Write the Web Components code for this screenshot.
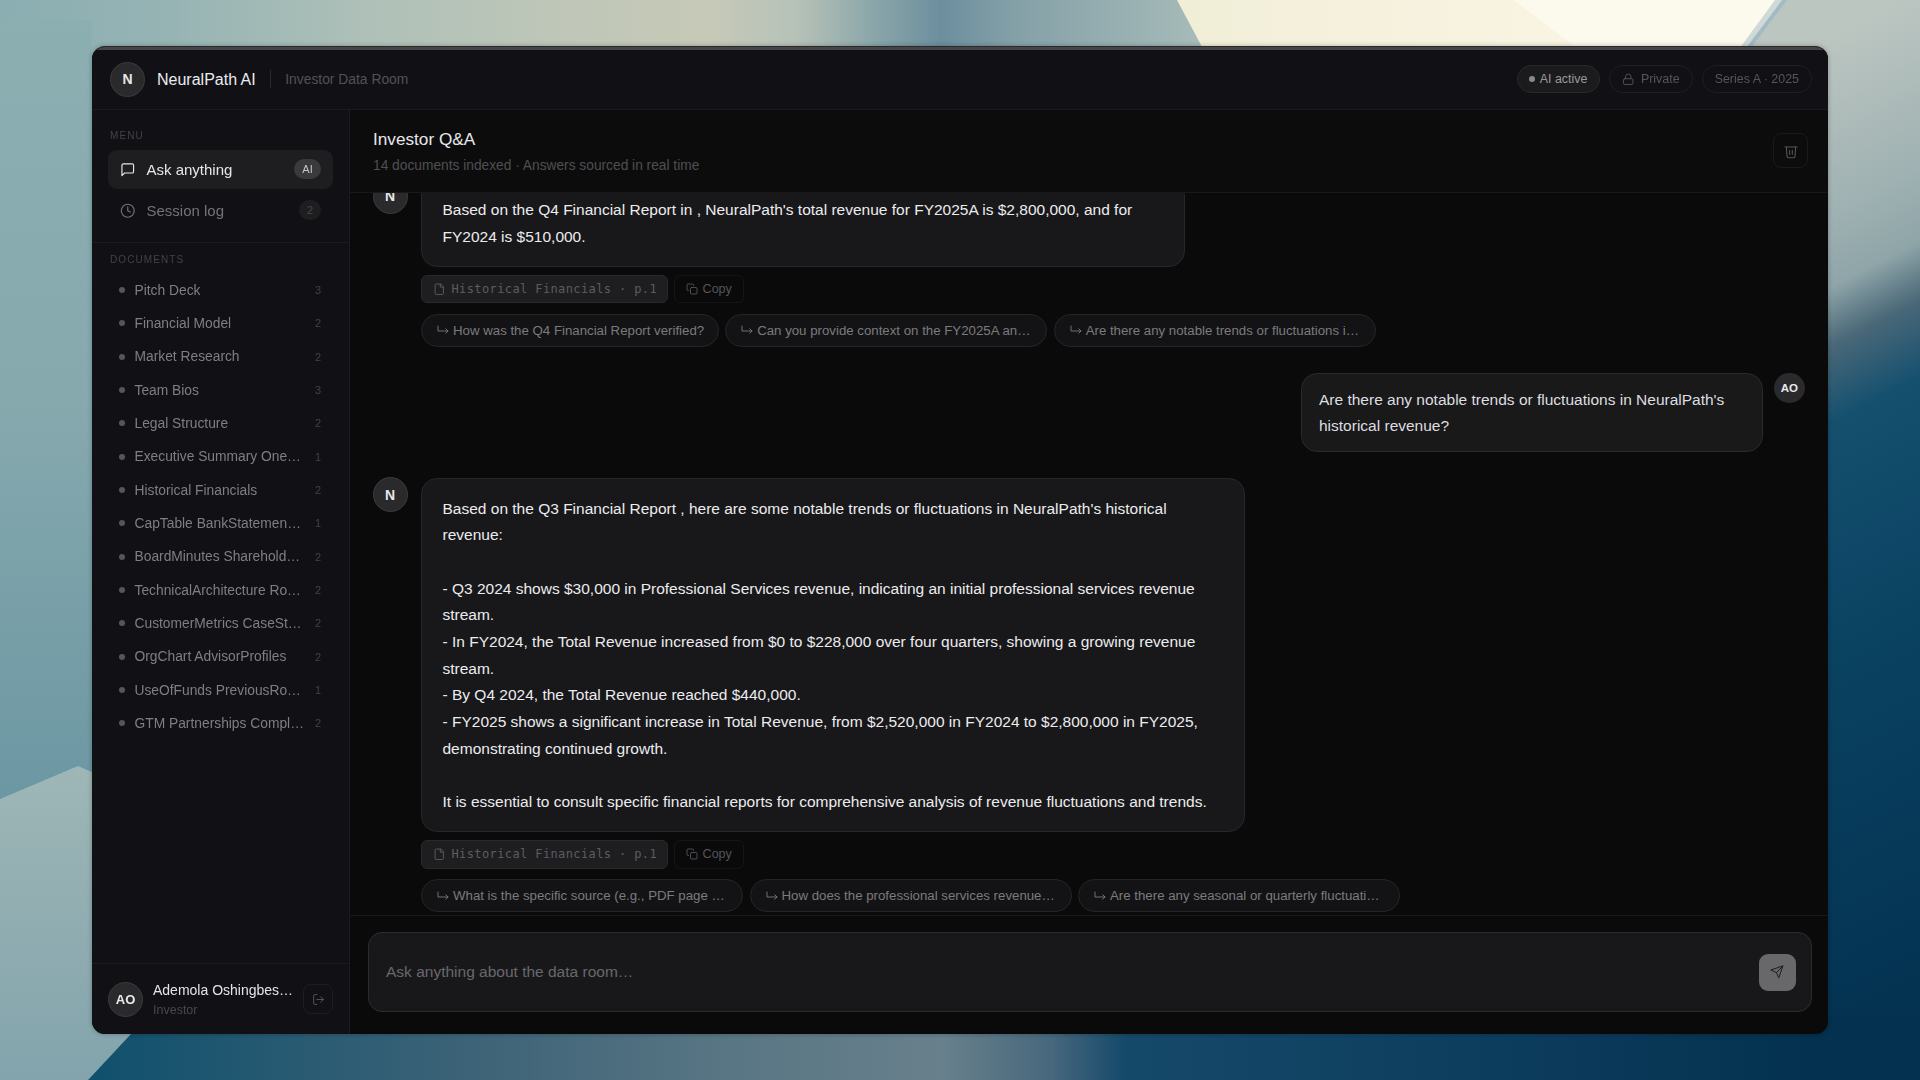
<!DOCTYPE html>
<html lang="en">
<head>
<meta charset="utf-8">
<title>NeuralPath AI</title>
<style>
  html, body { margin: 0; height: 100%; }
  body { height: 1080px; width: 1920px; box-sizing: border-box; padding: 46px 92px; overflow: hidden; background: #86a9ad;
         font-family: "Liberation Sans", Arial, sans-serif; display: flex; }
</style>
</head>
<body>
<np-wallpaper></np-wallpaper>
<np-window>
  <np-topbar slot="top"></np-topbar>
  <np-sidebar slot="side">
    <np-section-label>Menu</np-section-label>
    <np-nav icon="chat" badge="AI" active>Ask anything</np-nav>
    <np-nav icon="clock" badge="2">Session log</np-nav>
    <np-doclist slot="docs">
      <np-doc n="3">Pitch Deck</np-doc>
      <np-doc n="2">Financial Model</np-doc>
      <np-doc n="2">Market Research</np-doc>
      <np-doc n="3">Team Bios</np-doc>
      <np-doc n="2">Legal Structure</np-doc>
      <np-doc n="1">Executive Summary One…</np-doc>
      <np-doc n="2">Historical Financials</np-doc>
      <np-doc n="1">CapTable BankStatemen…</np-doc>
      <np-doc n="2">BoardMinutes Sharehold…</np-doc>
      <np-doc n="2">TechnicalArchitecture Ro…</np-doc>
      <np-doc n="2">CustomerMetrics CaseSt…</np-doc>
      <np-doc n="2">OrgChart AdvisorProfiles</np-doc>
      <np-doc n="1">UseOfFunds PreviousRo…</np-doc>
      <np-doc n="2">GTM Partnerships Compl…</np-doc>
    </np-doclist>
    <np-usercard slot="foot"></np-usercard>
  </np-sidebar>
  <np-chat slot="main">
    <np-bot-msg w="764" source="Historical Financials · p.1">
      Based on the Q4 Financial Report in , NeuralPath's total revenue for FY2025A is $2,800,000, and for<br>FY2024 is $510,000.
      <np-followup slot="followups">How was the Q4 Financial Report verified?</np-followup>
      <np-followup slot="followups">Can you provide context on the FY2025A an…</np-followup>
      <np-followup slot="followups">Are there any notable trends or fluctuations i…</np-followup>
    </np-bot-msg>
    <np-user-msg>Are there any notable trends or fluctuations in NeuralPath's<br>historical revenue?</np-user-msg>
    <np-bot-msg w="824" source="Historical Financials · p.1">
      Based on the Q3 Financial Report , here are some notable trends or fluctuations in NeuralPath's historical<br>revenue:<br><br>- Q3 2024 shows $30,000 in Professional Services revenue, indicating an initial professional services revenue<br>stream.<br>- In FY2024, the Total Revenue increased from $0 to $228,000 over four quarters, showing a growing revenue<br>stream.<br>- By Q4 2024, the Total Revenue reached $440,000.<br>- FY2025 shows a significant increase in Total Revenue, from $2,520,000 in FY2024 to $2,800,000 in FY2025,<br>demonstrating continued growth.<br><br>It is essential to consult specific financial reports for comprehensive analysis of revenue fluctuations and trends.
      <np-followup slot="followups">What is the specific source (e.g., PDF page …</np-followup>
      <np-followup slot="followups">How does the professional services revenue…</np-followup>
      <np-followup slot="followups">Are there any seasonal or quarterly fluctuati…</np-followup>
    </np-bot-msg>
  </np-chat>
</np-window>

<script>
const ICONS = {
  chat: '<path d="M21 15a2 2 0 0 1-2 2H7l-4 4V5a2 2 0 0 1 2-2h14a2 2 0 0 1 2 2z"/>',
  clock: '<circle cx="12" cy="12" r="10"/><path d="M12 6v6l4 2"/>',
  lock: '<rect x="3" y="11" width="18" height="11" rx="2"/><path d="M7 11V7a5 5 0 0 1 10 0v4"/>',
  trash: '<path d="M3 6h18"/><path d="M19 6l-1 14a2 2 0 0 1-2 2H8a2 2 0 0 1-2-2L5 6"/><path d="M10 11v6M14 11v6"/>',
  file: '<path d="M14 2H6a2 2 0 0 0-2 2v16a2 2 0 0 0 2 2h12a2 2 0 0 0 2-2V8z"/><path d="M14 2v6h6"/>',
  copy: '<rect x="9" y="9" width="13" height="13" rx="2"/><path d="M5 15H4a2 2 0 0 1-2-2V4a2 2 0 0 1 2-2h9a2 2 0 0 1 2 2v1"/>',
  logout: '<path d="M9 21H5a2 2 0 0 1-2-2V5a2 2 0 0 1 2-2h4"/><path d="M16 17l5-5-5-5"/><path d="M21 12H9"/>',
  send: '<path d="M22 2L11 13"/><path d="M22 2l-7 20-4-9-9-4z"/>',
  hook: '<path d="M2 4v10h20"/><path d="M17.5 9.5l4.5 4.5-4.5 4.5"/>'
};
function icon(name, size, sw) {
  return `<svg xmlns="http://www.w3.org/2000/svg" width="${size}" height="${size}" viewBox="0 0 24 24" fill="none" stroke="currentColor" stroke-width="${sw}" stroke-linecap="round" stroke-linejoin="round" style="display:block;flex:none">${ICONS[name]}</svg>`;
}
function define(tag, render) {
  customElements.define(tag, class extends HTMLElement {
    constructor() { super(); this.attachShadow({ mode: 'open' }); }
    connectedCallback() { this.shadowRoot.innerHTML = render(this); }
  });
}

define('np-wallpaper', () => `
<style>:host{position:fixed;inset:0;z-index:-1;display:block} svg{display:block}</style>
<svg xmlns="http://www.w3.org/2000/svg" width="1920" height="1080" viewBox="0 0 1920 1080">
  <defs>
    <linearGradient id="top" x1="0" x2="1920" y1="0" y2="0" gradientUnits="userSpaceOnUse">
      <stop offset="0" stop-color="#8aaeb2"/><stop offset=".09" stop-color="#97b4b4"/><stop offset=".19" stop-color="#aec0b8"/>
      <stop offset=".3" stop-color="#c0c7b8"/><stop offset=".37" stop-color="#c6c9b7"/><stop offset=".415" stop-color="#b6c2b8"/>
      <stop offset=".455" stop-color="#8ba6a9"/><stop offset=".49" stop-color="#6c8f9e"/><stop offset=".53" stop-color="#85a1a8"/>
      <stop offset=".625" stop-color="#a6bbb9"/><stop offset="1" stop-color="#a6bbb9"/>
    </linearGradient>
    <linearGradient id="left" x1="0" x2="0" y1="0" y2="800" gradientUnits="userSpaceOnUse">
      <stop offset="0" stop-color="#8cafb2"/><stop offset=".5" stop-color="#86a9ae"/><stop offset="1" stop-color="#6c97a3"/>
    </linearGradient>
    <linearGradient id="patch" x1="0" x2="0" y1="770" y2="1080" gradientUnits="userSpaceOnUse">
      <stop offset="0" stop-color="#9eb6b6"/><stop offset=".5" stop-color="#90adb1"/><stop offset="1" stop-color="#83a4ad"/>
    </linearGradient>
    <linearGradient id="bottom" x1="90" x2="1920" y1="0" y2="0" gradientUnits="userSpaceOnUse">
      <stop offset="0" stop-color="#10506c"/><stop offset=".22" stop-color="#3f6478"/><stop offset=".35" stop-color="#597684"/>
      <stop offset=".466" stop-color="#68808c"/><stop offset=".526" stop-color="#46677c"/><stop offset=".566" stop-color="#15496a"/>
      <stop offset=".75" stop-color="#0e3e5e"/><stop offset=".955" stop-color="#03304f"/><stop offset="1" stop-color="#03304f"/>
    </linearGradient>
    <linearGradient id="right" x1="1726" y1="11" x2="2258" y2="1031" gradientUnits="userSpaceOnUse">
      <stop offset="0" stop-color="#bcc6c1"/><stop offset=".06" stop-color="#bcc6c1"/><stop offset=".2" stop-color="#9fb1b2"/>
      <stop offset=".255" stop-color="#8fa5a8"/><stop offset=".3" stop-color="#4a6878"/><stop offset=".36" stop-color="#15506f"/>
      <stop offset=".54" stop-color="#0a4262"/><stop offset=".88" stop-color="#03304f"/><stop offset="1" stop-color="#03304f"/>
    </linearGradient>
    <linearGradient id="cream" x1="1180" x2="1540" y1="0" y2="0" gradientUnits="userSpaceOnUse">
      <stop offset="0" stop-color="#f1eed8"/><stop offset="1" stop-color="#f9f4e2"/>
    </linearGradient>
  </defs>
  <rect width="1920" height="1080" fill="url(#top)"/>
  <polygon points="1780,0 1920,0 1920,1080 1810,1080 1810,60 1735,60" fill="url(#right)"/>
  <polygon points="1177,0 1782,0 1738,60 1209,60" fill="url(#cream)"/>
  <polygon points="1514,0 1782,0 1738,60 1592,60" fill="#fcfaec"/>
  <polygon points="1775,0 1782,0 1738,60 1731,60" fill="#cfdad8"/>
  <polygon points="1782,0 1787,0 1742,60 1737,60" fill="#a3bac4"/>
  <rect x="0" y="20" width="92" height="800" fill="url(#left)"/>
  <polygon points="0,799 78,766 110,780 110,1015 131,1034 88,1080 0,1080" fill="url(#patch)"/>
  <polygon points="131,1034 131,1015 1920,1015 1920,1080 88,1080" fill="url(#bottom)"/>
  <polygon points="1810,1015 1920,1015 1920,1080 1810,1080" fill="#03314f"/>
</svg>`);

define('np-window', () => `
<style>
  :host{display:flex;flex-direction:column;flex:1;min-width:0;border-radius:13px;overflow:hidden;background:#0a0a0b;
        border-top:1px solid #2a2a2c;box-shadow:0 0 5px rgba(0,0,0,.28)}
  .hl{height:2.5px;background:#454547;flex:none}
  .body{flex:1;min-height:0;display:flex}
</style>
<div class="hl"></div>
<slot name="top"></slot>
<div class="body"><slot name="side"></slot><slot name="main"></slot></div>`);

define('np-topbar', () => `
<style>
  :host{display:flex;align-items:center;height:59px;flex:none;padding:0 16px 0 18px;background:#111115;border-bottom:1px solid #1c1c1f}
  .name{font-size:16px;color:#ececee;margin-left:12px;white-space:nowrap;padding-top:1px}
  .sep{width:1px;height:18px;background:#2b2b2e;margin:0 14px 0 14.5px}
  .sub{font-size:13.85px;color:#525255;white-space:nowrap}
  .sp{flex:1}
  .pills{display:flex;gap:9px}
</style>
<np-avatar size="35">N</np-avatar>
<span class="name">NeuralPath AI</span><span class="sep"></span><span class="sub">Investor Data Room</span>
<span class="sp"></span>
<div class="pills">
  <np-pill dot on>AI active</np-pill><np-pill icon="lock">Private</np-pill><np-pill>Series A · 2025</np-pill>
</div>`);

define('np-avatar', el => {
  const s = parseFloat(el.getAttribute('size') || 35);
  return `<style>
    :host{display:flex;flex:none;align-items:center;justify-content:center;width:${s}px;height:${s}px;border-radius:50%;box-sizing:border-box;
          background:#2a2a2c;border:${el.hasAttribute('flat') ? 0 : 1}px solid #3b3b3d;color:#e8e8ea;font-weight:700;font-size:${el.getAttribute('fs') || 14}px;font-family:"Liberation Sans",sans-serif}
  </style><slot></slot>`;
});

define('np-pill', el => `
<style>
  :host{display:inline-flex;align-items:center;gap:${el.hasAttribute('dot') ? 5 : 6}px;height:28px;box-sizing:border-box;padding:0 12px 0 ${el.hasAttribute('dot') ? 11 : 12}px;border-radius:14px;font-size:12.45px;white-space:nowrap;
        border:1px solid ${el.hasAttribute('on') ? '#29292c' : '#1f1f22'};background:${el.hasAttribute('on') ? '#1b1b1e' : 'transparent'};color:${el.hasAttribute('on') ? '#98989b' : '#565659'}}
  .dot{width:6px;height:6px;border-radius:50%;background:#8a8a8d}
</style>
${el.hasAttribute('dot') ? '<span class="dot"></span>' : ''}${el.getAttribute('icon') ? icon(el.getAttribute('icon'), 12.5, 1.8) : ''}<slot></slot>`);

define('np-sidebar', () => `
<style>
  :host{display:flex;flex-direction:column;width:258px;flex:none;box-sizing:border-box;background:#111115;border-right:1px solid #1c1c1f}
  .menu{padding:20px 16px 12px;display:flex;flex-direction:column;gap:2.5px;border-bottom:1px solid #1c1c1f}
  .docs{flex:1;min-height:0}
</style>
<div class="menu"><slot></slot></div>
<div class="docs"><slot name="docs"></slot></div>
<slot name="foot"></slot>`);

define('np-section-label', () => `
<style>
  :host{display:block;font-size:10px;line-height:12px;letter-spacing:1.1px;text-transform:uppercase;color:#434346;padding:0 2px 6px}
</style><slot></slot>`);

define('np-nav', el => {
  const a = el.hasAttribute('active');
  return `<style>
    :host{display:flex;align-items:center;height:38.5px;box-sizing:border-box;padding:0 12px 0 12px;border-radius:9px;gap:11px;font-size:15px;
          background:${a ? '#1e1e21' : 'transparent'};color:${a ? '#e6e6e8' : '#747477'}}
    .t{flex:1;white-space:nowrap}
    .b{min-width:${a ? 27 : 22}px;height:20px;padding:0 3px;box-sizing:border-box;border-radius:10px;background:${a ? '#3a3a3d' : '#1e1e21'};color:${a ? '#c5c5c7' : '#47474a'};font-size:11px;display:flex;align-items:center;justify-content:center}
  </style>${icon(el.getAttribute('icon'), 15.5, 1.8)}<span class="t"><slot></slot></span><span class="b">${el.getAttribute('badge')}</span>`;
});

define('np-doclist', () => `
<style>:host{display:block;padding:11px 16px 0}
  .l{font-size:10px;line-height:12px;letter-spacing:1.1px;color:#434346;padding:0 2px 8px}
</style>
<div class="l">DOCUMENTS</div><slot></slot>`);

define('np-doc', el => `
<style>
  :host{display:flex;align-items:center;height:33.33px;padding:0 12px 0 11px;font-size:13.8px;color:#7f7f82}
  .d{width:6px;height:6px;border-radius:50%;background:#565659;flex:none;margin-right:10px;margin-left:-.5px}
  .t{flex:1;min-width:0;white-space:nowrap;margin-right:4px}
  .n{font-size:11px;color:#434346;flex:none}
</style>
<span class="d"></span><span class="t"><slot></slot></span><span class="n">${el.getAttribute('n')}</span>`);

define('np-usercard', () => `
<style>
  :host{display:flex;align-items:center;margin-top:auto;height:71px;box-sizing:border-box;padding:0 16px 0 16px;border-top:1px solid #1c1c1f;gap:10px}
  .i{flex:1;min-width:0}
  .n{font-size:14px;line-height:18px;color:#e4e4e6;white-space:nowrap}
  .r{font-size:12.5px;line-height:16px;color:#48484b;margin-top:3px}
  .o{width:30px;height:30px;box-sizing:border-box;border:1px solid #1e1e21;border-radius:8px;color:#55555a;display:flex;align-items:center;justify-content:center;flex:none;margin-left:2px}
</style>
<np-avatar size="35" fs="13">AO</np-avatar>
<div class="i"><div class="n">Ademola Oshingbes…</div><div class="r">Investor</div></div>
<div class="o">${icon('logout', 13, 1.8)}</div>`);

define('np-chat', () => `
<style>
  :host{display:flex;flex-direction:column;flex:1;min-width:0;background:#0a0a0b}
  .head{display:flex;align-items:center;justify-content:space-between;height:83px;flex:none;box-sizing:border-box;padding:0 20px 0 23px;border-bottom:1px solid #19191b;background:#0c0c0d}
  .head>div:first-child{padding-top:1px}
  h1{font-size:17.2px;line-height:22px;font-weight:400;color:#e8e8ea;margin:0}
  p{font-size:13.75px;line-height:18px;color:#4f4f52;margin:7px 0 0}
  .tr{width:35px;height:35px;box-sizing:border-box;border:1px solid #1a1a1c;border-radius:8px;color:#56565a;display:flex;align-items:center;justify-content:center}
  .msgs{flex:1;min-height:0;overflow:hidden;display:flex;flex-direction:column;justify-content:flex-end;padding:0 23.5px 3px 22.5px}
  .comp{flex:none;height:119px;box-sizing:border-box;border-top:1px solid #19191b;padding:16px 16px 22px 18px;display:flex}
  .box{flex:1;display:flex;align-items:center;justify-content:space-between;box-sizing:border-box;border:1px solid #2c2c2f;background:#18181b;border-radius:14px;padding:0 15.5px 0 17px}
  .ph{font-size:15.5px;color:#68686b;white-space:nowrap}
  .send{width:37px;height:37px;border-radius:9px;background:#68686a;color:#1c1c1e;display:flex;align-items:center;justify-content:center}
</style>
<div class="head">
  <div><h1>Investor Q&amp;A</h1><p>14 documents indexed · Answers sourced in real time</p></div>
  <div class="tr">${icon('trash', 16, 1.6)}</div>
</div>
<div class="msgs"><slot></slot></div>
<div class="comp"><div class="box"><span class="ph">Ask anything about the data room…</span><span class="send">${icon('send', 14, 1.7)}</span></div></div>`);

define('np-bot-msg', el => `
<style>
  :host{display:grid;grid-template-columns:35px 1fr;column-gap:13.5px;flex:none;margin-bottom:26px}
  :host(:last-child){margin-bottom:0}
  np-avatar{margin-top:-1px}
  .b{box-sizing:border-box;width:${el.getAttribute('w')}px;padding:16.5px 20px 15px 20.5px;background:#18181b;border:1px solid #27272a;border-radius:16px;
     font-size:15.5px;line-height:26.7px;color:#ececee;white-space:nowrap}
  .row{display:flex;gap:5.5px;margin-top:8px}
  .src{display:flex;align-items:center;gap:6px;height:28.5px;box-sizing:border-box;padding:0 10px 0 11px;border-radius:6px;background:#1e1e21;border:1px solid #29292c;color:#5c5c60;
       font:12px/1 "DejaVu Sans Mono","Liberation Mono",monospace;letter-spacing:.39px;white-space:nowrap}
  .cp{display:flex;align-items:center;gap:5px;height:28.5px;box-sizing:border-box;padding:0 11px;border-radius:6px;border:1px solid #161618;color:#55555a;font-size:12.5px}
  .fu{display:flex;gap:6.5px;margin-top:10.5px}
</style>
<np-avatar size="35">N</np-avatar>
<div>
  <div class="b"><slot></slot></div>
  <div class="row"><span class="src">${icon('file', 12.5, 1.8)}${el.getAttribute('source')}</span><span class="cp">${icon('copy', 12, 1.8)}Copy</span></div>
  <div class="fu"><slot name="followups"></slot></div>
</div>`);

define('np-followup', el => `
<style>
  :host{display:flex;align-items:center;gap:4px;height:33px;box-sizing:border-box;padding:0 13.5px 0 15px;border-radius:17px;background:#131315;border:1px solid #262629;color:#7b7b7e;font-size:13.25px;white-space:nowrap;${el.textContent.trim().endsWith('…') ? 'width:322px;' : ''}}
</style>${icon('hook', 12, 1.8)}<slot></slot>`);

define('np-user-msg', () => `
<style>
  :host{display:flex;justify-content:flex-end;align-items:flex-start;gap:11.5px;flex:none;margin-bottom:26px}
  .b{box-sizing:border-box;width:462px;padding:13px 17px 12.5px 17.5px;background:#19191a;border:1px solid #2a2a2c;border-radius:16px;font-size:15.5px;line-height:26px;color:#dedee0;white-space:nowrap}
</style>
<div class="b"><slot></slot></div><np-avatar size="30.5" fs="11.5" flat>AO</np-avatar>`);
</script>
</body>
</html>
